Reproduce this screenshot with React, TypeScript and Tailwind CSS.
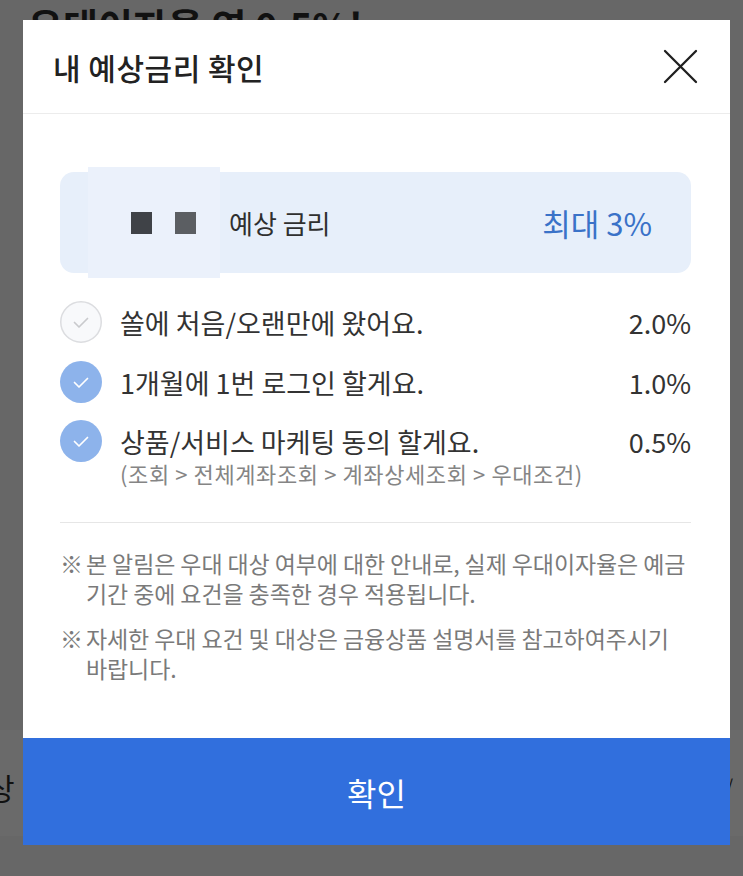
import React from "react";

function Check({ on }: { on: boolean }) {
  return (
    <svg width="42" height="42" viewBox="0 0 42 42" className="shrink-0">
      {on ? (
        <circle cx="21" cy="21" r="21" fill="#8db3eb" />
      ) : (
        <circle cx="21" cy="21" r="20.25" fill="#f8f9fb" stroke="#dcdde0" strokeWidth="1.5" />
      )}
      <path
        d="M14.5 21.5 L19 26 L27.5 17.5"
        fill="none"
        stroke={on ? "#ffffff" : "#c9cacd"}
        strokeWidth="1.7"
        strokeLinecap="round"
        strokeLinejoin="round"
      />
    </svg>
  );
}

export default function App() {
  return (
    <div className="relative w-[743px] h-[876px] overflow-hidden bg-[#676767] font-['Noto_Sans_CJK_KR','Noto_Sans',sans-serif]">
      {/* page behind the dimmed overlay */}
      <div className="absolute left-[28px] top-[6px] text-[38px] font-bold leading-none text-[#111] whitespace-nowrap">
        우대이자율 연 0.5%!
      </div>
      <div className="absolute left-0 top-[730px] w-full h-[106px] bg-[#6a6a6a]" />
      <div className="absolute left-[-13px] top-[772px] text-[30px] leading-none text-[#111]">상</div>
      <div className="absolute left-[726px] top-[776px] text-[18px] leading-none text-[#111]">/</div>

      {/* modal */}
      <div className="absolute left-[23px] top-[20px] w-[707px] h-[825px] bg-white flex flex-col">
        <div className="h-[94px] shrink-0 flex items-center justify-between pl-[30px] pr-[32px] border-b border-[#ececec]">
          <div className="text-[30px] font-medium text-[#222] leading-none tracking-[0.5px]">내 예상금리 확인</div>
          <svg width="35" height="35" viewBox="0 0 35 35">
            <path d="M2 2 L33 33 M33 2 L2 33" stroke="#1f1f1f" strokeWidth="2.3" strokeLinecap="round" />
          </svg>
        </div>

        <div className="flex-1 pl-[37px] pr-[39px] pt-[58px]">
          <div className="relative h-[101px] rounded-[14px] bg-[#e7effa]">
            <div className="absolute left-[28px] top-[-5px] w-[132px] h-[111px] bg-[#ebf1fb]" />
            <div className="relative h-full flex items-center pl-[71px] pr-[39px]">
              <div className="w-[21px] h-[22px] bg-[#3f4247]" />
              <div className="w-[21px] h-[22px] bg-[#5b5e62] ml-[23px]" />
              <div className="ml-[33px] text-[26px] text-[#2f2f2f] leading-none">예상 금리</div>
              <div className="ml-auto text-[31px] text-[#3a72c8] leading-none">최대 3%</div>
            </div>
          </div>

          <div className="mt-[28px] flex items-center h-[42px]">
            <Check on={false} />
            <div className="ml-[18px] text-[27px] text-[#333] leading-none">쏠에 처음/오랜만에 왔어요.</div>
            <div className="ml-auto text-[27px] text-[#333] leading-none">2.0%</div>
          </div>

          <div className="mt-[18px] flex items-center h-[42px]">
            <Check on={true} />
            <div className="ml-[18px] text-[27px] text-[#333] leading-none">1개월에 1번 로그인 할게요.</div>
            <div className="ml-auto text-[27px] text-[#333] leading-none">1.0%</div>
          </div>

          <div className="mt-[17px] flex items-start">
            <Check on={true} />
            <div className="ml-[18px] flex flex-col">
              <div className="h-[42px] flex items-center text-[27px] text-[#333] leading-none whitespace-nowrap">상품/서비스 마케팅 동의 할게요.</div>
              <div className="text-[22px] tracking-[0.6px] text-[#858585] leading-[22px] whitespace-nowrap">(조회 &gt; 전체계좌조회 &gt; 계좌상세조회 &gt; 우대조건)</div>
            </div>
            <div className="ml-auto h-[42px] flex items-center text-[27px] text-[#333] leading-none">0.5%</div>
          </div>

          <div className="mt-[38px] h-px bg-[#e6e6e6]" />

          <div className="mt-[25px] flex text-[23px] leading-[30px] text-[#7a7a7a] whitespace-nowrap tracking-[-0.1px]">
            <div className="w-[26px] shrink-0">※</div>
            <div>
              본 알림은 우대 대상 여부에 대한 안내로, 실제 우대이자율은 예금
              <br />
              기간 중에 요건을 충족한 경우 적용됩니다.
            </div>
          </div>
          <div className="mt-[15px] flex text-[23px] leading-[30px] text-[#7a7a7a] whitespace-nowrap tracking-[-0.1px]">
            <div className="w-[26px] shrink-0">※</div>
            <div>
              자세한 우대 요건 및 대상은 금융상품 설명서를 참고하여주시기
              <br />
              바랍니다.
            </div>
          </div>
        </div>

        <div className="h-[107px] shrink-0 bg-[#316fdd] flex items-center justify-center text-white text-[32px] leading-none">
          확인
        </div>
      </div>
    </div>
  );
}
